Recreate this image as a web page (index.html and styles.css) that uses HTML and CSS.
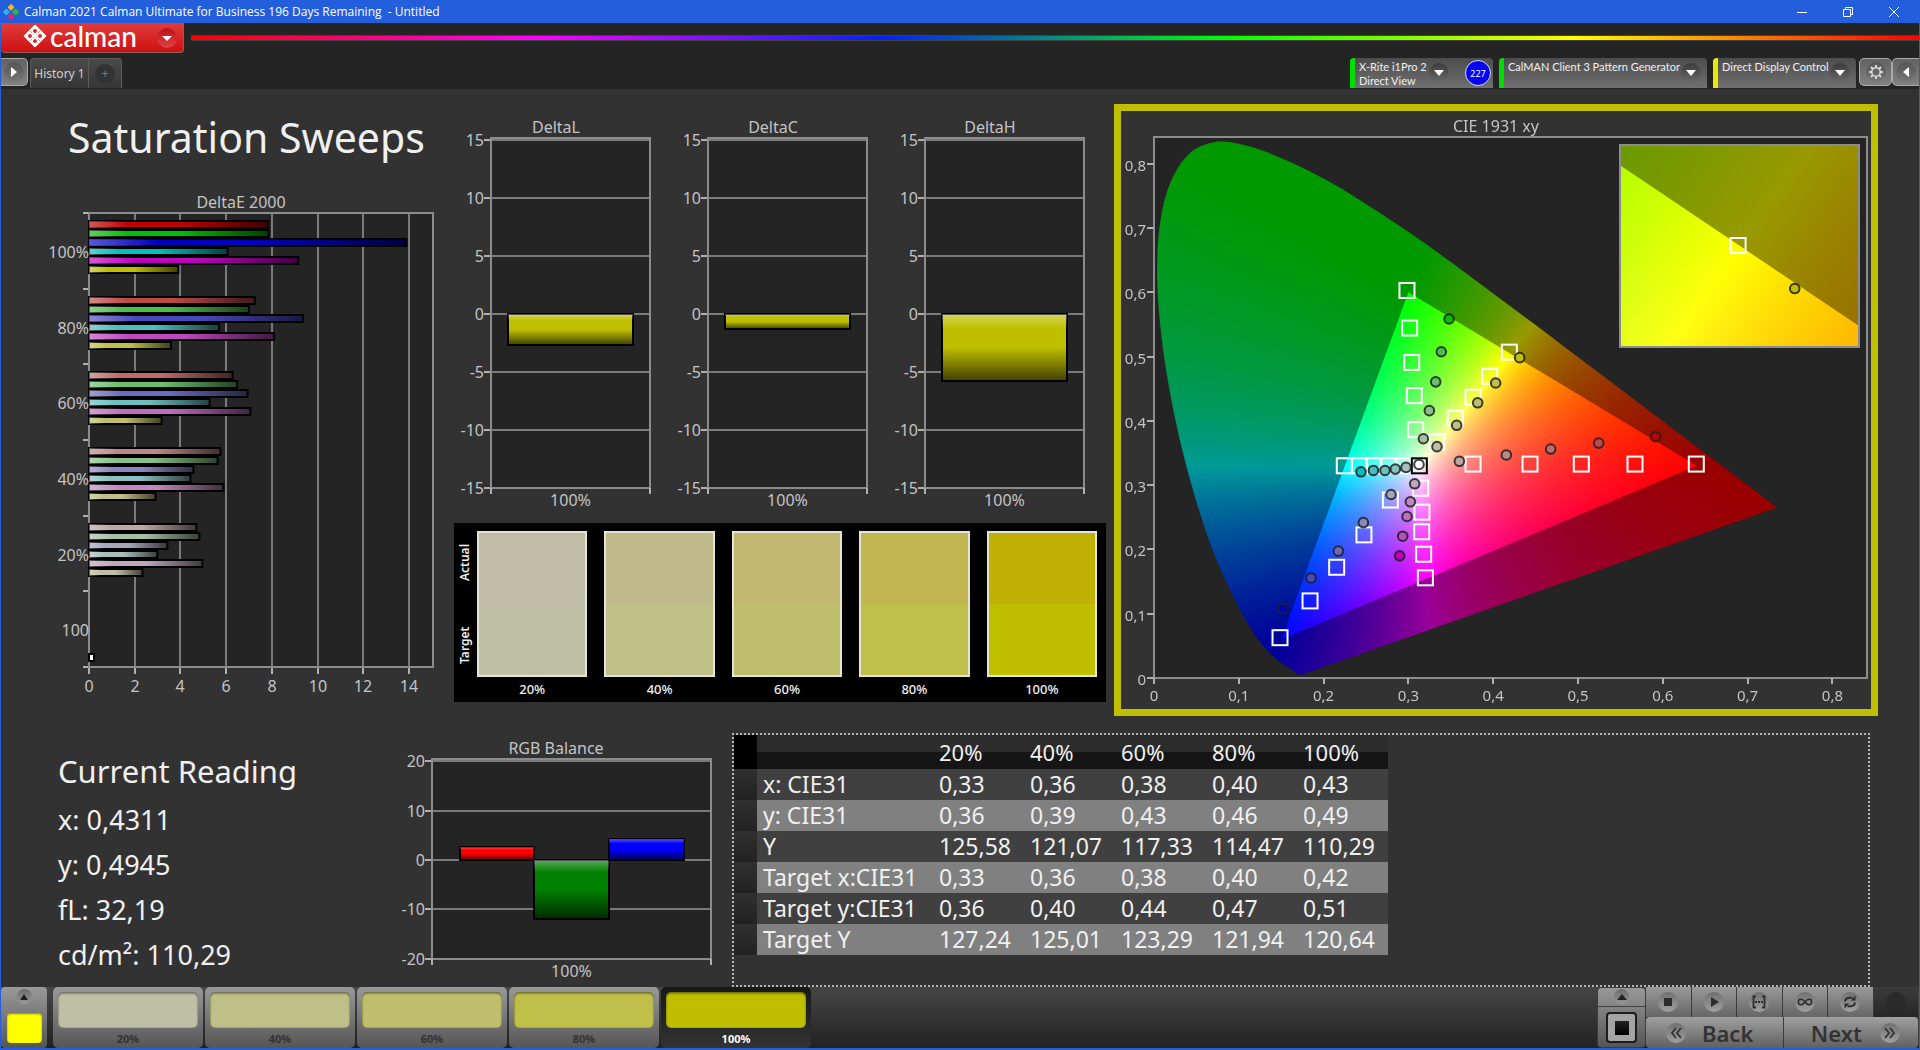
FILE: index.html
```html
<!DOCTYPE html>
<html lang="en">
<head>
    <meta charset="UTF-8">
    <meta name="viewport" content="width=device-width, initial-scale=1.0">
    <title>Calman 2021 Calman Ultimate for Business</title>
    <link rel="stylesheet" href="styles.css">
</head>
<body>

<header class="titlebar">
    <svg class="app-icon" viewBox="0 0 16 16" width="16" height="16">
        <rect x="5.5" y="0.8" width="5" height="5" rx="1" transform="rotate(45 8 3.3)" fill="#f5b81c"/>
        <rect x="0.8" y="5.5" width="5" height="5" rx="1" transform="rotate(45 3.3 8)" fill="#2fb4f0"/>
        <rect x="10.2" y="5.5" width="5" height="5" rx="1" transform="rotate(45 12.7 8)" fill="#2ac22a"/>
        <rect x="5.5" y="10.2" width="5" height="5" rx="1" transform="rotate(45 8 12.7)" fill="#e8206a"/>
    </svg>
    <span class="window-title">Calman 2021 Calman Ultimate for Business 196 Days Remaining&nbsp; - Untitled</span>
    <button class="win-btn" aria-label="Minimize"><svg viewBox="0 0 12 12" width="12" height="12"><path d="M1 6.5h10"/></svg></button>
    <button class="win-btn" aria-label="Restore"><svg viewBox="0 0 12 12" width="12" height="12"><path d="M1.500 3.500h7v7h-7zM3.500 3.500v-2h7v7h-2"/></svg></button>
    <button class="win-btn" aria-label="Close"><svg viewBox="0 0 12 12" width="12" height="12"><path d="M1 1l10 10M11 1L1 11"/></svg></button>
</header>

<div class="brand-row">
    <button class="brand">
        <svg class="brand-mark" viewBox="0 0 24 24" width="24" height="24">
            <path d="M12 1.500L22.500 12 12 22.500 1.500 12z" fill="#fff" stroke="#fff" stroke-width="1.600" stroke-linejoin="round"/>
            <path d="M7.500 7.500l9 9M16.500 7.500l-9 9" stroke="#d62a2a" stroke-width="1"/>
            <g fill="#d62a2a">
                <circle cx="12" cy="7" r="2"/><circle cx="7" cy="12" r="2"/>
                <circle cx="17" cy="12" r="2"/><circle cx="12" cy="17" r="2"/>
            </g>
            <g fill="#fff">
                <circle cx="12" cy="12" r="1.800"/><circle cx="9.500" cy="9.500" r="1.500"/><circle cx="14.500" cy="9.500" r="1.500"/>
                <circle cx="9.500" cy="14.500" r="1.500"/><circle cx="14.500" cy="14.500" r="1.500"/>
            </g>
        </svg>
        <span class="brand-name">calman</span>
        <span class="round brand-caret"><svg viewBox="0 0 10 6" width="10" height="6"><path d="M0 1h10L5 6z" fill="#fff"/></svg></span>
    </button>
    <div class="rainbow"></div>
</div>

<nav class="toolbar">
    <button class="side-btn side-left" aria-label="Expand"><span class="round"><svg viewBox="0 0 6 10" width="6" height="10"><path d="M0 0l6 5-6 5z" fill="#fff"/></svg></span></button>
    <div class="tabs">
        <button class="tab">History 1</button>
        <button class="tab tab-add" aria-label="Add history"><span class="round">+</span></button>
    </div>
    <div class="devices">
        <div class="device meter">
            <button class="device-name green">X-Rite i1Pro 2<br>Direct View</button>
            <span class="round caret"><svg viewBox="0 0 10 6" width="10" height="6"><path d="M0 0h10L5 6z" fill="#fff"/></svg></span>
            <span class="badge">227</span>
        </div>
        <div class="device generator">
            <button class="device-name green">CalMAN Client 3 Pattern Generator</button>
            <span class="round caret"><svg viewBox="0 0 10 6" width="10" height="6"><path d="M0 0h10L5 6z" fill="#fff"/></svg></span>
        </div>
        <div class="device display">
            <button class="device-name yellow">Direct Display Control</button>
            <span class="round caret"><svg viewBox="0 0 10 6" width="10" height="6"><path d="M0 0h10L5 6z" fill="#fff"/></svg></span>
        </div>
        <button class="side-btn" aria-label="Settings"><span class="round"><svg viewBox="0 0 16 16" width="16" height="16" fill="none" stroke="#d8d8d8"><circle cx="8" cy="8" r="4.300" stroke-width="1.600"/><path d="M8 1v2.500M8 12.500V15M1 8h2.500M12.500 8H15M3 3l1.800 1.800M11.200 11.200L13 13M13 3l-1.800 1.800M4.800 11.200L3 13" stroke-width="2"/></svg></span></button>
        <button class="side-btn side-right" aria-label="Collapse"><span class="round"><svg viewBox="0 0 6 10" width="6" height="10"><path d="M6 0L0 5l6 5z" fill="#fff"/></svg></span></button>
    </div>
</nav>

<main>
    <div class="row row-top">
        <section class="sweeps">
            <h1>Saturation Sweeps</h1>
            <svg id="deltaE" viewBox="0 0 439 510"></svg>
        </section>

        <section class="middle">
            <div class="deltas">
                <svg id="deltaL" viewBox="0 0 217 410"></svg>
                <svg id="deltaC" viewBox="0 0 217 410"></svg>
                <svg id="deltaH" viewBox="0 0 217 410"></svg>
            </div>
            <div class="swatches">
                <div class="swatch-sides"><span>Actual</span><span>Target</span></div>
                <figure class="s20"><div class="swatch"></div><figcaption>20%</figcaption></figure>
                <figure class="s40"><div class="swatch"></div><figcaption>40%</figcaption></figure>
                <figure class="s60"><div class="swatch"></div><figcaption>60%</figcaption></figure>
                <figure class="s80"><div class="swatch"></div><figcaption>80%</figcaption></figure>
                <figure class="s100"><div class="swatch"></div><figcaption>100%</figcaption></figure>
            </div>
        </section>

        <section class="cie">
            <canvas id="gamut" width="750" height="598"></canvas>
            <svg id="ciePlot" viewBox="0 0 750 598"></svg>
        </section>
    </div>

    <div class="row row-bottom">
        <section class="reading">
            <h2>Current Reading</h2>
            <p>x: 0,4311</p>
            <p>y: 0,4945</p>
            <p>fL: 32,19</p>
            <p>cd/m²: 110,29</p>
        </section>

        <section class="balance">
            <svg id="rgb" viewBox="0 0 331 264"></svg>
        </section>

        <section class="results">
            <table>
                <thead>
                    <tr><td class="corner"></td><th></th><th>20%</th><th>40%</th><th>60%</th><th>80%</th><th>100%</th></tr>
                </thead>
                <tbody>
                    <tr><td class="edge"></td><th>x: CIE31</th><td>0,33</td><td>0,36</td><td>0,38</td><td>0,40</td><td>0,43</td></tr>
                    <tr><td class="edge"></td><th>y: CIE31</th><td>0,36</td><td>0,39</td><td>0,43</td><td>0,46</td><td>0,49</td></tr>
                    <tr><td class="edge"></td><th>Y</th><td>125,58</td><td>121,07</td><td>117,33</td><td>114,47</td><td>110,29</td></tr>
                    <tr><td class="edge"></td><th>Target x:CIE31</th><td>0,33</td><td>0,36</td><td>0,38</td><td>0,40</td><td>0,42</td></tr>
                    <tr><td class="edge"></td><th>Target y:CIE31</th><td>0,36</td><td>0,40</td><td>0,44</td><td>0,47</td><td>0,51</td></tr>
                    <tr><td class="edge"></td><th>Target Y</th><td>127,24</td><td>125,01</td><td>123,29</td><td>121,94</td><td>120,64</td></tr>
                </tbody>
            </table>
        </section>
    </div>
</main>

<footer>
    <button class="pattern-btn" aria-label="Pattern colour">
        <span class="round small"><svg viewBox="0 0 8 6" width="8" height="6"><path d="M0 6h8L4 0z" fill="#222"/></svg></span>
        <span class="current-color"></span>
    </button>
    <div class="steps">
        <button class="step s20"><span class="chip"></span>20%</button>
        <button class="step s40"><span class="chip"></span>40%</button>
        <button class="step s60"><span class="chip"></span>60%</button>
        <button class="step s80"><span class="chip"></span>80%</button>
        <button class="step s100 active"><span class="chip"></span>100%</button>
    </div>
    <div class="controls">
        <button class="window-btn" aria-label="Pattern window">
            <span class="window-up"><span class="round small"><svg viewBox="0 0 10 6" width="10" height="6"><path d="M0 6h10L5 0z" fill="#222"/></svg></span></span>
            <span class="window-box"></span>
        </button>
        <div class="transport">
            <div class="media">
                <button aria-label="Stop"><span class="round"><svg viewBox="0 0 16 16" width="16" height="16"><path d="M4 4h8v8H4z" fill="#2c2c2c"/></svg></span></button>
                <button aria-label="Play"><span class="round"><svg viewBox="0 0 16 16" width="16" height="16"><path d="M5 3l8 5-8 5z" fill="#2c2c2c"/></svg></span></button>
                <button aria-label="Read series"><span class="round"><svg viewBox="0 0 16 16" width="16" height="16" fill="none" stroke="#2c2c2c" stroke-width="1.800"><path d="M5 2.500H2.500v11H5M11 2.500h2.500v11H11"/><path d="M4 8h8" stroke-dasharray="2 1"/></svg></span></button>
                <button aria-label="Read continuous"><span class="round"><svg viewBox="0 0 16 16" width="16" height="16" fill="none" stroke="#2c2c2c" stroke-width="1.500"><path d="M8 8C6.500 6 5.500 5.300 4 5.300a2.700 2.700 0 0 0 0 5.400C5.500 10.700 6.500 10 8 8s2.500-2.700 4-2.700a2.700 2.700 0 0 1 0 5.400C10.500 10.700 9.500 10 8 8z"/></svg></span></button>
                <button aria-label="Refresh"><span class="round"><svg viewBox="0 0 16 16" width="16" height="16" fill="none" stroke="#2c2c2c" stroke-width="2"><path d="M3 7.500C3.300 5 5.200 3.800 7.500 3.800h3M13 8.500c-.3 2.500-2.200 3.700-4.500 3.700h-3"/><path d="M13.500 1.500v5H8.800zM2.500 14.500v-5h4.700z" fill="#2c2c2c" stroke="none"/></svg></span></button>
                <button class="off" aria-label="Record" disabled><span class="round"></span></button>
            </div>
            <div class="paging">
                <button><span class="round"><svg viewBox="0 0 14 14" width="14" height="14" fill="none" stroke="#333" stroke-width="1.800"><path d="M7 2L3 7l4 5M12 2L8 7l4 5"/></svg></span>Back</button>
                <button class="next">Next<span class="round"><svg viewBox="0 0 14 14" width="14" height="14" fill="none" stroke="#333" stroke-width="1.800"><path d="M2 2l4 5-4 5M7 2l4 5-4 5"/></svg></span></button>
            </div>
        </div>
    </div>
</footer>

<script src="script.js"></script>
</body>
</html>
```
FILE: styles.css
```css
* {
    box-sizing: border-box;
}
body {
    margin: 0;
    min-height: 100vh;
    display: flex;
    flex-direction: column;
    background: #323232;
    border: 1px solid #235edc;
    border-top: 0;
    border-bottom-width: 2px;
    font-family: "Noto Sans", "Open Sans", sans-serif;
    color: #f0f0f0;
}
button {
    font-family: inherit;
    color: inherit;
    border: 0;
    padding: 0;
    margin: 0;
    cursor: pointer;
}
svg {
    display: block;
}
h1, h2, p, figure {
    margin: 0;
    font-weight: normal;
}
.round {
    display: flex;
    align-items: center;
    justify-content: center;
    flex: none;
    width: 20px;
    height: 20px;
    border-radius: 50%;
    background: linear-gradient(#555, #777);
}
.round.small {
    width: 15px;
    height: 15px;
    background: linear-gradient(#6a6a6a, #999);
}

/* window title */
.titlebar {
    display: flex;
    align-items: center;
    height: 23px;
    padding: 0 2px;
    background: #235edc;
    color: #fff;
}
.window-title {
    flex: 1;
    margin-left: 5px;
    font-family: "Open Sans", sans-serif;
    font-size: 12px;
    line-height: 16px;
}
.win-btn {
    width: 46px;
    height: 20px;
    background: none;
    display: flex;
    align-items: center;
    justify-content: center;
}
.win-btn svg {
    fill: none;
    stroke: #fff;
}

/* logo row */
.brand-row {
    display: flex;
    height: 35px;
    background: #242424;
}
.brand {
    display: flex;
    align-items: center;
    width: 183px;
    height: 30px;
    padding: 0 6px 0 22px;
    background: linear-gradient(#e03c3c, #cf1010);
    border: 1px solid #8c6060;
    border-top: 0;
    border-left: 0;
    border-radius: 0 0 4px 4px;
}
.brand-name {
    flex: 1;
    padding-left: 3px;
    text-align: left;
    font-family: Lato, sans-serif;
    font-size: 28px;
    font-weight: 500;
    line-height: 28px;
    color: #fff;
}
.brand-name, .brand-mark {
    margin-top: -3px;
}
.brand-caret {
    background: linear-gradient(#c01018, #e04444);
}
.rainbow {
    flex: 1;
    height: 6px;
    margin: 12px 0 0 7px;
    border: solid #444;
    border-width: 1px 0;
    background: linear-gradient(to right, #f00, #f0f 20%, #0020ff 40%, #0f0 60%, #ff0 80%, #f00);
}

/* tabs and devices */
.toolbar {
    display: flex;
    height: 31px;
    background: #242424;
}
.side-btn {
    display: flex;
    align-items: center;
    justify-content: center;
    width: 33px;
    height: 28px;
    background: linear-gradient(#636363, #828282);
    border: 1px solid #aaa;
    border-radius: 5px;
}
.side-left {
    width: 27px;
    border-left: 0;
    border-radius: 0 5px 5px 0;
}
.side-right {
    width: 27px;
    border-right: 0;
    border-radius: 5px 0 0 5px;
}
.tabs {
    display: flex;
    margin-left: 2px;
    height: 30px;
    background: linear-gradient(#4a4a4a, #363636);
    border: 1px solid #5c5c5c;
    border-bottom: 0;
    border-radius: 4px 4px 0 0;
}
.tab {
    width: 57px;
    background: none;
    font-size: 12px;
    color: #d0d0d0;
    white-space: nowrap;
}
.tab-add {
    width: 33px;
    display: flex;
    align-items: center;
    justify-content: center;
    border-left: 1px solid #5c5c5c;
}
.tab-add .round {
    background: #333;
    color: #777;
}
.devices {
    display: flex;
    margin-left: auto;
}
.device {
    display: flex;
    align-items: center;
    height: 30px;
    margin-right: 6px;
    padding-right: 6px;
    background: linear-gradient(#4c4c4c, #707070);
    border-radius: 4px 4px 0 0;
}
.device-name {
    align-self: stretch;
    display: flex;
    flex: 1;
    padding: 2px 0 0 4px;
    background: none;
    border-left: 5px solid #0d0;
    border-radius: 4px 0 0 0;
    font-family: Lato, sans-serif;
    font-size: 11px;
    line-height: 14px;
    text-align: left;
    white-space: nowrap;
    color: #f0f0f0;
}
.device-name.yellow {
    border-color: #e8e800;
}
.device-name + .caret {
    background: linear-gradient(#3c3c3c, #6a6a6a);
}
.meter {
    width: 143px;
    padding-right: 2px;
}
.generator {
    width: 208px;
}
.display {
    width: 143px;
    margin-right: 3px;
}
.badge {
    display: flex;
    align-items: center;
    justify-content: center;
    width: 26px;
    height: 26px;
    margin-left: 16px;
    border: 1px solid #ddd;
    border-radius: 50%;
    background: #00f;
    font-size: 9px;
    color: #fff;
}

/* workspace */
main {
    flex: 1;
    display: flex;
    flex-direction: column;
}
.row {
    display: grid;
}
.row-top {
    grid-template-columns: 439fr 671fr 808fr;
    padding-bottom: 4px;
}
.row-bottom {
    flex: 1;
    grid-template-columns: 400fr 331fr 1187fr;
}
h1 {
    padding: 20px 0 25px 67px;
    font-size: 41px;
    line-height: 56px;
    white-space: nowrap;
}
.middle {
    padding: 21px 5px 0 0;
}
.deltas {
    display: grid;
    grid-template-columns: repeat(3, 1fr);
    padding-right: 15px;
}
.swatches {
    display: flex;
    gap: 17px;
    margin: 3px 0 0 14px;
    padding: 8px 9px 3px 3px;
    background: #000;
}
.swatches figure {
    flex: 1;
}
.swatch-sides {
    display: flex;
    justify-content: space-between;
    width: 15px;
    height: 146px;
    margin-right: -12px;
    padding: 13px 0;
    writing-mode: vertical-rl;
    transform: rotate(180deg);
    flex-direction: row-reverse;
    font-size: 12px;
    line-height: 15px;
    font-weight: 600;
}
.swatch {
    height: 146px;
    border: 2px solid #e4e4d8;
    background: linear-gradient(var(--actual) 50%, var(--target) 50%);
}
figcaption {
    padding-top: 2px;
    font-size: 13px;
    line-height: 20px;
    font-weight: 500;
    text-align: center;
}
.s20 { --actual: #bfbda5; --target: #bfbfa5; }
.s40 { --actual: #c0b98a; --target: #bfbf88; }
.s60 { --actual: #c1b76f; --target: #bfbf6b; }
.s80 { --actual: #c2b650; --target: #bfbf4a; }
.s100 { --actual: #c1b106; --target: #bfbf00; }

.cie {
    display: grid;
    align-self: start;
    margin: 15px 41px 0 3px;
    border: 7px solid #bfbf00;
}
.cie canvas, .cie svg {
    grid-area: 1 / 1;
    width: 100%;
}

/* charts */
.plot { fill: #242424; }
.frame { fill: none; stroke: #8c8c8c; stroke-width: 2; }
.grid { stroke: #7a7a7a; stroke-width: 2; }
.tick { stroke: #b0b0b0; stroke-width: 2; }
.plot, .frame, .grid, .tick { shape-rendering: crispEdges; }
.label { fill: #c4c4c4; font-size: 16px; }
.cie .label { font-size: 15px; }
.title { fill: #c4c4c4; font-size: 16px; text-anchor: middle; }
.end { text-anchor: end; }
.mid { text-anchor: middle; }
.bar { stroke: #000; stroke-width: 2; }
.target { fill: none; stroke: #fff; stroke-width: 2; }
.white-point { stroke: #000; }
.reading-dot { stroke: #202020; stroke-opacity: 0.85; stroke-width: 2; }
.inset-frame { fill: none; stroke: #8c8c8c; stroke-width: 2; }

/* bottom row */
.reading {
    padding: 28px 0 0 57px;
    white-space: nowrap;
}
h2 {
    font-size: 31px;
    line-height: 46px;
    margin-bottom: 3px;
}
.reading p {
    font-size: 27px;
    line-height: 45px;
}
.results {
    margin: 13px 49px 0 0;
    border: 2px dotted #b4b4b4;
}
table {
    border-collapse: collapse;
    table-layout: fixed;
    width: 654px;
    font-size: 23px;
    line-height: 31px;
}
th, td {
    width: 91px;
    height: 31px;
    padding: 0 0 0 6px;
    font-weight: normal;
    text-align: left;
    white-space: nowrap;
}
thead th {
    height: 34px;
    background: linear-gradient(#2c2c2c 50%, #151515 50%);
    font-size: 22px;
}
th:nth-child(2) {
    width: 176px;
}
thead .corner {
    width: 23px;
    background: #000;
}
tbody .edge {
    background: linear-gradient(#303030, #222);
}
tbody tr {
    background: #404040;
}
tbody tr:nth-child(even) {
    background: #808080;
}

/* bottom bar */
footer {
    display: flex;
    height: 61px;
    background: linear-gradient(#464646, #222);
}
.pattern-btn {
    display: flex;
    flex-direction: column;
    align-items: center;
    justify-content: space-between;
    width: 46px;
    padding: 2px 0 5px;
    background: linear-gradient(#999, #555);
    border-radius: 4px;
}
.current-color {
    width: 35px;
    height: 30px;
    border-radius: 4px;
    background: #ff0;
    box-shadow: inset 0 1px 2px #880;
}
.steps {
    display: flex;
    gap: 2px;
    margin-left: 6px;
}
.step {
    width: 150px;
    padding: 5px 5px 0;
    background: linear-gradient(#999, #555);
    border-radius: 5px;
    font-size: 11px;
    font-weight: bold;
    line-height: 22px;
    color: #333;
}
.step.active {
    background: linear-gradient(#181818, #333);
    color: #fff;
}
.chip {
    display: block;
    height: 36px;
    border-radius: 5px;
    background: var(--target);
    box-shadow: inset 0 2px 2px rgba(0, 0, 0, 0.3), inset 0 0 2px rgba(0, 0, 0, 0.4);
}
.controls {
    display: flex;
    margin-left: auto;
}
.window-btn {
    display: flex;
    flex-direction: column;
    align-items: center;
    width: 49px;
    background: linear-gradient(#999, #555);
    border: 1px solid #3c3c3c;
    border-radius: 4px;
}
.window-up {
    display: flex;
    justify-content: center;
    align-self: stretch;
    padding: 1px 0 2px;
    border-bottom: 1px solid #444;
}
.window-box {
    width: 31px;
    height: 31px;
    margin-top: 5px;
    border: 2px solid #1c1c1c;
    border-radius: 4px;
    background: linear-gradient(#222, #000) center / 14px 14px no-repeat, #a4a4a4;
}
.transport {
    width: 273px;
}
.media, .paging {
    display: flex;
}
.media button {
    flex: 1;
    display: flex;
    align-items: center;
    justify-content: center;
    height: 30px;
    background: linear-gradient(#999, #666);
    border-right: 1px solid #3c3c3c;
}
.media .round, .paging .round {
    background: linear-gradient(#707070, #a0a0a0);
}
.media .off {
    background: linear-gradient(#3c3c3c, #262626);
}
.media .off .round {
    background: #2a2a2a;
}
.paging button {
    flex: 1;
    display: flex;
    align-items: center;
    justify-content: flex-start;
    gap: 16px;
    height: 31px;
    padding: 0 20px;
    background: linear-gradient(#a0a0a0, #606060);
    border-right: 1px solid #3c3c3c;
    border-radius: 4px 0 0 4px;
    font-size: 22px;
    font-weight: 600;
    line-height: 30px;
    color: #333;
}
.paging .next {
    justify-content: flex-end;
    gap: 18px;
    padding-right: 18px;
    border-radius: 0 4px 4px 0;
}
```
FILE: script.js
```js
const NS = "http://www.w3.org/2000/svg";

function add(parent, tag, attrs, text) {
    const node = document.createElementNS(NS, tag);
    for (const key in attrs) node.setAttribute(key, attrs[key]);
    if (text !== undefined) node.textContent = text;
    parent.appendChild(node);
    return node;
}

function line(svg, x1, y1, x2, y2, cls) {
    add(svg, "line", { x1, y1, x2, y2, class: cls });
}

// light-to-dark sheen drawn over every bar
function sheen(svg, id, vertical) {
    const defs = add(svg, "defs", {});
    const g = add(defs, "linearGradient", { id, x2: vertical ? 0 : 1, y2: vertical ? 1 : 0 });
    [[0, "#fff", 0.35], [0.22, "#fff", 0], [0.5, "#000", 0], [0.95, "#000", 0.6], [1, "#000", 0.65]].forEach(s =>
        add(g, "stop", { offset: s[0], "stop-color": s[1], "stop-opacity": s[2] }));
}

function bar(svg, x, y, width, height, color, shade) {
    add(svg, "rect", { x, y, width, height, fill: color, class: "bar" });
    add(svg, "rect", { x, y, width, height, fill: `url(#${shade})` });
}

// channel floor for each saturation step
const LEVELS = { 100: 0, 80: 74, 60: 107, 40: 136, 20: 165 };

function sweepColor(mask, level) {
    const c = mask.split("").map(on => on === "1" ? 191 : LEVELS[level]);
    return `rgb(${c.join(",")})`;
}

const ORDER = ["100", "010", "001", "011", "101", "110"];

function drawDeltaE() {
    const svg = document.getElementById("deltaE");
    const data = [
        [100, [7.85, 7.85, 13.89, 6.07, 9.16, 3.91]],
        [80, [7.26, 7.0, 9.37, 5.69, 8.1, 3.59]],
        [60, [6.28, 6.48, 6.94, 5.28, 7.06, 3.18]],
        [40, [5.75, 5.63, 4.57, 4.44, 5.88, 2.91]],
        [20, [4.7, 4.83, 3.43, 2.99, 4.96, 2.34]]
    ];
    const left = 88, top = 23, right = 432, bottom = 477, unit = 22.85;
    const band = (bottom - top) / 6;

    sheen(svg, "sheenE", false);
    add(svg, "text", { x: 240, y: 18, class: "title" }, "DeltaE 2000");
    add(svg, "rect", { x: left, y: top, width: right - left, height: bottom - top, class: "plot" });
    for (let v = 0; v <= 14; v += 2) {
        const x = Math.round(left + v * unit);
        line(svg, x, top, x, bottom, "grid");
        line(svg, x, bottom, x, bottom + 7, "tick");
        add(svg, "text", { x: x, y: bottom + 25, class: "label mid" }, v);
    }
    for (let i = 0; i <= 6; i++) {
        line(svg, left - 6, top + i * band, left, top + i * band, "tick");
    }
    add(svg, "rect", { x: left, y: top, width: right - left, height: bottom - top, class: "frame" });
    data.forEach(([level, values], i) => {
        values.forEach((v, j) =>
            bar(svg, left, Math.round(top + i * band + 8) + j * 9, v * unit, 7, sweepColor(ORDER[j], level), "sheenE"));
        add(svg, "text", { x: left, y: top + (i + 0.5) * band + 7, class: "label end" }, level + "%");
    });
    add(svg, "text", { x: left, y: top + 5.5 * band + 7, class: "label end" }, "100");
    add(svg, "rect", { x: left, y: 464, width: 5, height: 7, fill: "#fff", class: "bar" });
}

// vertical bar chart used by the delta charts and the RGB balance
function drawColumns(id, o) {
    const svg = document.getElementById(id);
    const y = v => Math.round(o.zero - v * o.unit);

    sheen(svg, "sheen" + id, true);
    add(svg, "text", { x: o.titleX, y: o.top - 5, class: "title" }, o.title);
    add(svg, "rect", { x: o.left, y: o.top, width: o.right - o.left, height: y(-o.max) - o.top, class: "plot" });
    for (let v = -o.max; v <= o.max; v += o.step) {
        line(svg, o.left, y(v), o.right, y(v), "grid");
        line(svg, o.left - 7, y(v), o.left, y(v), "tick");
        add(svg, "text", { x: o.left - 7, y: y(v) + 6, class: "label end" }, v);
    }
    add(svg, "rect", { x: o.left, y: o.top, width: o.right - o.left, height: y(-o.max) - o.top, class: "frame" });
    line(svg, o.left, y(-o.max), o.left, y(-o.max) + 6, "tick");
    line(svg, o.right, y(-o.max), o.right, y(-o.max) + 6, "tick");
    o.bars.forEach(b =>
        bar(svg, b.x, Math.min(y(0), y(b.value)), b.width, Math.abs(y(b.value) - y(0)), b.color, "sheen" + id));
    add(svg, "text", { x: (o.left + o.right) / 2, y: y(-o.max) + 18, class: "label mid" }, "100%");
}

function drawDelta(id, title, value) {
    drawColumns(id, {
        title, titleX: 116, left: 51, right: 210, top: 28, zero: 204, unit: 11.6, max: 15, step: 5,
        bars: [{ x: 68, width: 125, value, color: "#bfbf00" }]
    });
}

/* CIE diagram */

const LOCUS = [
    [.1741, .005], [.1733, .0048], [.1714, .0051], [.1689, .0069], [.1644, .0109], [.1566, .0177],
    [.144, .0297], [.1355, .0399], [.1241, .0578], [.1096, .0868], [.0913, .1327], [.0687, .2007],
    [.0454, .295], [.0235, .4127], [.0082, .5384], [.0039, .6548], [.0139, .7502], [.0389, .812],
    [.0743, .8338], [.1142, .8262], [.1547, .8059], [.1929, .7816], [.2296, .7543], [.3016, .6923],
    [.3731, .6245], [.4441, .5547], [.5125, .4866], [.5752, .4242], [.627, .3725], [.6658, .334],
    [.6915, .3083], [.719, .2809], [.7347, .2653]
];
const REC709 = [[.64, .33], [.3, .6], [.15, .06]];

const MAIN = { left: 33, top: 26, right: 746, bottom: 567, x0: 0, y0: 0, sx: 848, sy: 643 };
const INSET = { left: 499, top: 34, right: 738, bottom: 236, x0: .3944, y0: .4803, sx: 4800, sy: 4060 };

const px = (v, x) => v.left + (x - v.x0) * v.sx;
const py = (v, y) => v.bottom - (y - v.y0) * v.sy;

// brightest colour with this chromaticity, out-of-gamut channels cut at zero
function xyToRgb(x, y) {
    const X = x / y, Z = (1 - x - y) / y;
    const rgb = [
        3.2406 * X - 1.5372 - 0.4986 * Z,
        -0.9689 * X + 1.8758 + 0.0415 * Z,
        0.0557 * X - 0.2040 + 1.0570 * Z
    ].map(c => Math.max(c, 0));
    const max = Math.max(...rgb);
    return rgb.map(c => 255 * c / max);
}

function colorField(v, dim) {
    const off = document.createElement("canvas");
    off.width = v.right - v.left;
    off.height = v.bottom - v.top;
    const ctx = off.getContext("2d");
    const img = ctx.createImageData(off.width, off.height);
    for (let j = 0; j < off.height; j++) {
        for (let i = 0; i < off.width; i++) {
            const rgb = xyToRgb(v.x0 + i / v.sx, Math.max(v.y0 + (off.height - j) / v.sy, 0.0005));
            const k = (j * off.width + i) * 4;
            img.data[k] = rgb[0] * dim;
            img.data[k + 1] = rgb[1] * dim;
            img.data[k + 2] = rgb[2] * dim;
            img.data[k + 3] = 255;
        }
    }
    ctx.putImageData(img, 0, 0);
    return off;
}

function paintView(ctx, v) {
    const locus = new Path2D();
    const pts = LOCUS.map(p => [px(v, p[0]), py(v, p[1])]);
    locus.moveTo(...pts[0]);
    for (let i = 0; i < pts.length - 1; i++) {
        const a = pts[Math.max(i - 1, 0)], b = pts[i], c = pts[i + 1], d = pts[Math.min(i + 2, pts.length - 1)];
        locus.bezierCurveTo(b[0] + (c[0] - a[0]) / 6, b[1] + (c[1] - a[1]) / 6,
            c[0] - (d[0] - b[0]) / 6, c[1] - (d[1] - b[1]) / 6, c[0], c[1]);
    }
    locus.closePath();

    const triangle = new Path2D();
    REC709.forEach(p => triangle.lineTo(px(v, p[0]), py(v, p[1])));
    triangle.closePath();

    ctx.save();
    ctx.beginPath();
    ctx.rect(v.left, v.top, v.right - v.left, v.bottom - v.top);
    ctx.clip();
    ctx.clip(locus);
    ctx.drawImage(colorField(v, 0.6), v.left, v.top);
    ctx.clip(triangle);
    ctx.drawImage(colorField(v, 1), v.left, v.top);
    ctx.restore();
}

const TARGETS = [
    [.2983, .6027], [.3015, .5443], [.3039, .4908], [.307, .4391], [.3086, .3862],
    [.3762, .3327], [.4434, .3327], [.5039, .3327], [.5672, .3327], [.6395, .3327],
    [.3337, .3672], [.3553, .4041], [.3762, .4367], [.3958, .4692], [.419, .5068],
    [.2787, .2768], [.2476, .2226], [.2154, .1722], [.184, .1199], [.1486, .0627],
    [.2244, .33], [.2425, .33], [.2594, .33], [.2762, .33], [.2948, .33],
    [.3145, .2952], [.316, .2579], [.3157, .2274], [.318, .1925], [.32, .1558]
];

// measured points, from 100% down to 20%
const READINGS = {
    "010": [[.3479, .5584], [.3388, .5074], [.3322, .4606], [.3247, .4158], [.3176, .3721]],
    "100": [[.5916, .3752], [.5244, .3653], [.4678, .3561], [.4155, .3469], [.3601, .337]],
    "110": [[.4312, .4982], [.4029, .4588], [.3817, .428], [.3569, .393], [.3337, .3598]],
    "001": [[.1521, .1082], [.1851, .1556], [.2174, .1974], [.2469, .2417], [.2795, .2854]],
    "011": [[.2441, .3207], [.2587, .3228], [.2724, .3228], [.2846, .3249], [.2972, .3275]],
    "101": [[.2897, .19], [.2933, .2205], [.2984, .2512], [.3023, .274], [.3074, .302]]
};

function target(svg, cx, cy, cls) {
    add(svg, "rect", { x: cx - 7.5, y: cy - 7.5, width: 15, height: 15, class: "target " + (cls || "") });
}

function dot(svg, cx, cy, fill) {
    add(svg, "circle", { cx, cy, r: 4.8, fill, class: "reading-dot" });
}

function drawCie() {
    const ctx = document.getElementById("gamut").getContext("2d");
    const svg = document.getElementById("ciePlot");
    const m = MAIN, n = INSET;

    ctx.fillStyle = "#242424";
    ctx.fillRect(m.left, m.top, m.right - m.left, m.bottom - m.top);
    paintView(ctx, m);
    paintView(ctx, n);

    add(svg, "text", { x: 375, y: 21, class: "title" }, "CIE 1931 xy");
    add(svg, "rect", { x: m.left, y: m.top, width: m.right - m.left, height: m.bottom - m.top, class: "frame" });
    for (let i = 0; i <= 8; i++) {
        const text = i ? "0," + i : "0";
        const x = px(m, i / 10), y = py(m, i / 10);
        line(svg, x, m.bottom, x, m.bottom + 6, "tick");
        line(svg, m.left - 7, y, m.left, y, "tick");
        add(svg, "text", { x, y: m.bottom + 23, class: "label mid" }, text);
        add(svg, "text", { x: m.left - 8, y: y + 7, class: "label end" }, text);
    }
    TARGETS.forEach(t => target(svg, px(m, t[0]), py(m, t[1])));
    target(svg, px(m, .3129), py(m, .33), "white-point");
    for (const mask in READINGS) {
        READINGS[mask].forEach((p, i) =>
            dot(svg, px(m, p[0]), py(m, p[1]), sweepColor(mask, 100 - i * 20)));
    }
    dot(svg, px(m, .3125), py(m, .3321), "#fff");

    add(svg, "rect", { x: n.left, y: n.top, width: n.right - n.left, height: n.bottom - n.top, class: "inset-frame" });
    target(svg, px(n, .419), py(n, .5053));
    dot(svg, px(n, .4308), py(n, .4947), "#bfbf00");
}

drawDeltaE();
drawDelta("deltaL", "DeltaL", -2.7);
drawDelta("deltaC", "DeltaC", -1.3);
drawDelta("deltaH", "DeltaH", -5.8);
drawColumns("rgb", {
    title: "RGB Balance", titleX: 155, left: 31, right: 310, top: 39, zero: 140, unit: 4.93, max: 20, step: 10,
    bars: [
        { x: 59, width: 74, value: 2.7, color: "#ff0000" },
        { x: 133, width: 75, value: -11.9, color: "#008000" },
        { x: 208, width: 75, value: 4.2, color: "#0000ff" }
    ]
});
drawCie();
```
